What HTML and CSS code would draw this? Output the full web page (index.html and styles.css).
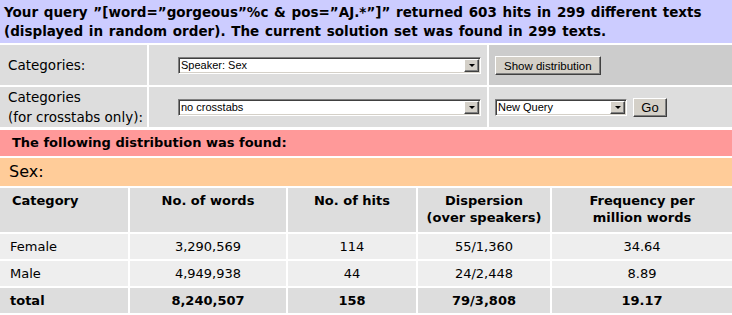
FILE: index.html
```html
<!DOCTYPE html>
<html lang="en">
<head>
    <meta charset="UTF-8">
    <title>Distribution</title>
    <link rel="stylesheet" href="styles.css">
</head>
<body>
    <div class="page">
        <div class="banner query">Your query ”[word=”gorgeous”%c &amp; pos=”AJ.*”]” returned 603 hits in 299 different texts (displayed in random order). The current solution set was found in 299 texts.</div>

        <div class="form-row">
            <div class="label">Categories:</div>
            <div class="field">
                <span class="select wide">
                    <select><option>Speaker: Sex</option></select>
                    <span class="arrow"></span>
                </span>
            </div>
            <div class="action dark">
                <button class="btn">Show distribution</button>
            </div>
        </div>

        <div class="form-row">
            <div class="label">Categories<br>(for crosstabs only):</div>
            <div class="field">
                <span class="select wide">
                    <select><option>no crosstabs</option></select>
                    <span class="arrow"></span>
                </span>
            </div>
            <div class="action">
                <span class="select small">
                    <select><option>New Query</option></select>
                    <span class="arrow"></span>
                </span>
                <button class="btn go">Go</button>
            </div>
        </div>

        <div class="banner found">The following distribution was found:</div>
        <div class="banner cat">Sex:</div>

        <table class="dist">
            <colgroup>
                <col style="width: 128px">
                <col style="width: 156px">
                <col style="width: 128px">
                <col style="width: 132px">
                <col>
            </colgroup>
            <thead>
                <tr>
                    <th class="left">Category</th>
                    <th>No. of words</th>
                    <th>No. of hits</th>
                    <th>Dispersion<br>(over speakers)</th>
                    <th>Frequency per<br>million words</th>
                </tr>
            </thead>
            <tbody>
                <tr>
                    <td class="left">Female</td>
                    <td>3,290,569</td>
                    <td>114</td>
                    <td>55/1,360</td>
                    <td>34.64</td>
                </tr>
                <tr>
                    <td class="left">Male</td>
                    <td>4,949,938</td>
                    <td>44</td>
                    <td>24/2,448</td>
                    <td>8.89</td>
                </tr>
                <tr class="total">
                    <td class="left">total</td>
                    <td>8,240,507</td>
                    <td>158</td>
                    <td>79/3,808</td>
                    <td>19.17</td>
                </tr>
            </tbody>
        </table>
    </div>
</body>
</html>
```

FILE: styles.css
```css
body {
    margin: 0;
    font-family: "DejaVu Sans", sans-serif;
    color: #000;
    background: #fff;
}
.page {
    display: flex;
    flex-direction: column;
    gap: 2px;
    width: 732px;
}
.banner {
    padding: 0 4px;
}
.query {
    background-color: #ccccff;
    font-weight: bold;
    font-size: 13.5px;
    line-height: 19px;
    padding: 3px 4px 2px;
    word-spacing: 1px;
}
.found {
    background-color: #ff9999;
    font-weight: bold;
    font-size: 13px;
    line-height: 26px;
    padding-left: 12px;
    margin-top: 1px;
}
.cat {
    background-color: #ffcc99;
    font-size: 16px;
    line-height: 28px;
    padding-left: 9px;
}
.form-row {
    display: grid;
    grid-template-columns: 147px 338px 1fr;
    gap: 2px;
    height: 40px;
}
.form-row > div {
    background-color: #dddddd;
    display: flex;
    align-items: center;
}
.form-row .dark {
    background-color: #cccccc;
}
.label {
    font-size: 13.5px;
    line-height: 20px;
    padding-left: 8px;
    white-space: nowrap;
}
.field {
    padding-left: 29px;
}
.action {
    padding-left: 6px;
    gap: 6px;
}
.select {
    display: inline-flex;
    height: 17px;
    box-sizing: border-box;
    border: 1px solid;
    border-color: #808080 #ffffff #ffffff #808080;
    box-shadow: inset 1px 1px #404040, inset -1px -1px #d4d0c8;
    background: #fff;
    padding: 1px;
}
.select.wide {
    width: 303px;
}
.select.small {
    width: 132px;
}
.select select {
    flex: 1;
    appearance: none;
    border: none;
    background: transparent;
    font-family: "Liberation Sans", Arial, sans-serif;
    font-size: 11px;
    padding: 0 1px;
    margin: 0;
    height: 13px;
    line-height: 13px;
    color: #000;
}
.arrow {
    width: 15px;
    height: 13px;
    box-sizing: border-box;
    background: #d4d0c8;
    border: 1px solid;
    border-color: #ffffff #404040 #404040 #ffffff;
    box-shadow: inset -1px -1px #808080;
    display: flex;
    align-items: center;
    justify-content: center;
}
.arrow::after {
    content: "";
    border-left: 3px solid transparent;
    border-right: 3px solid transparent;
    border-top: 3px solid #000;
    margin-top: 1px;
}
.btn {
    font-family: "Liberation Sans", Arial, sans-serif;
    font-size: 11.5px;
    height: 19px;
    padding: 0 8px;
    background: #d4d0c8;
    border: 1px solid;
    border-color: #ffffff #404040 #404040 #ffffff;
    box-shadow: inset -1px -1px #808080;
    color: #000;
    margin-top: 1px;
}
.btn.go {
    width: 34px;
    font-size: 13px;
    padding: 0;
}
.dist {
    table-layout: fixed;
    border-spacing: 2px;
    margin: -2px -2px 0;
    width: 736px;
    font-size: 13px;
}
.dist th {
    background-color: #dddddd;
    font-weight: bold;
    text-align: center;
    vertical-align: top;
    line-height: 17px;
    padding: 4px 4px 6px;
    height: 34px;
}
.dist td {
    background-color: #eeeeee;
    text-align: center;
    height: 25px;
    padding: 0 4px;
}
.dist .left {
    text-align: left;
    padding-left: 10px;
}
.dist th.left {
    padding-left: 12px;
}
.dist .total td {
    background-color: #dddddd;
    font-weight: bold;
}
```
